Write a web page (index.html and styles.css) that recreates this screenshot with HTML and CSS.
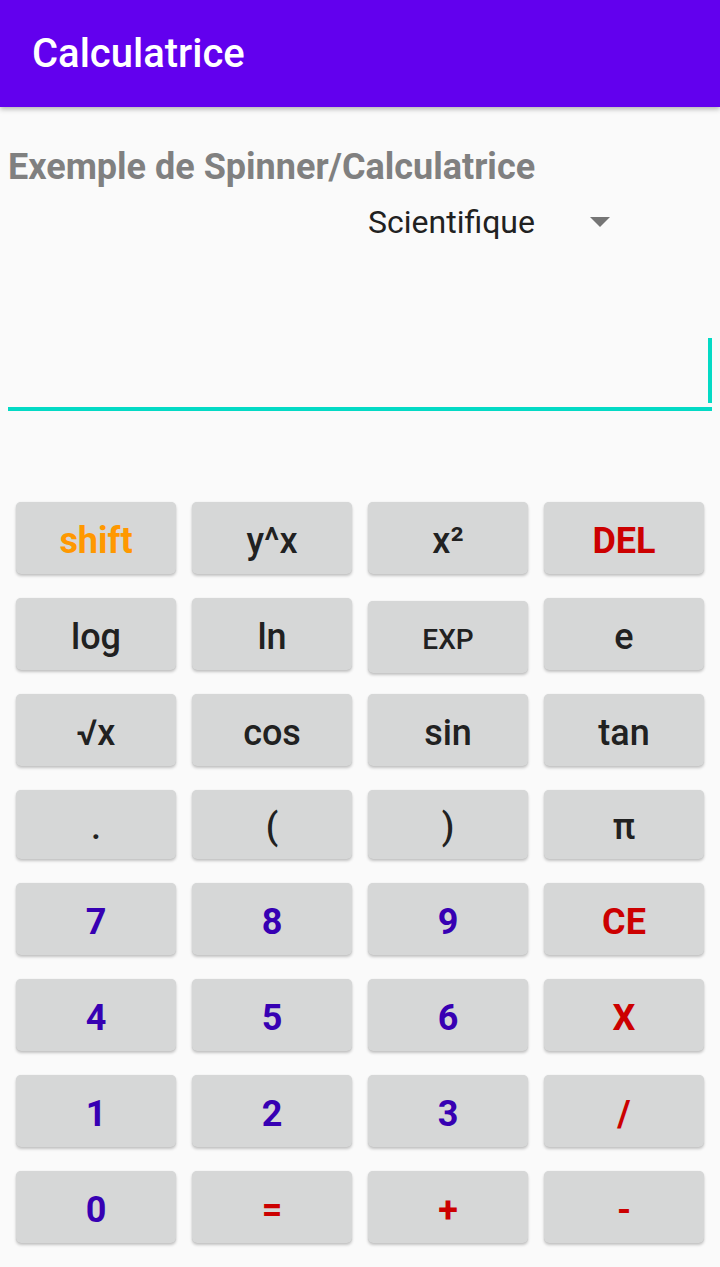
FILE: index.html
```html
<!DOCTYPE html>
<html lang="fr">
<head>
<meta charset="utf-8">
<title>Calculatrice</title>
<link rel="stylesheet" href="styles.css">
</head>
<body>
<header class="appbar"><h1 class="appbar-title">Calculatrice</h1></header>
<main class="content">
  <h2 class="label">Exemple de Spinner/Calculatrice</h2>
  <div class="spinner-row">
    <div class="spinner">
      <span class="spinner-text">Scientifique</span>
      <svg class="spinner-arrow" width="20" height="10" viewBox="0 0 20 10"><path d="M0 0H20L10 10Z" fill="#757575"/></svg>
    </div>
  </div>
  <div class="edit"><span class="cursor"></span></div>
  <div class="keys">
    <div class="row">
      <button class="key bold orange">shift</button>
      <button class="key">y^x</button>
      <button class="key">x²</button>
      <button class="key bold red">DEL</button>
    </div>
    <div class="row">
      <button class="key">log</button>
      <button class="key">ln</button>
      <button class="key small">EXP</button>
      <button class="key">e</button>
    </div>
    <div class="row">
      <button class="key">√x</button>
      <button class="key">cos</button>
      <button class="key">sin</button>
      <button class="key">tan</button>
    </div>
    <div class="row short">
      <button class="key">.</button>
      <button class="key">(</button>
      <button class="key">)</button>
      <button class="key">π</button>
    </div>
    <div class="row">
      <button class="key bold purple">7</button>
      <button class="key bold purple">8</button>
      <button class="key bold purple">9</button>
      <button class="key bold red">CE</button>
    </div>
    <div class="row">
      <button class="key bold purple">4</button>
      <button class="key bold purple">5</button>
      <button class="key bold purple">6</button>
      <button class="key bold red">X</button>
    </div>
    <div class="row">
      <button class="key bold purple">1</button>
      <button class="key bold purple">2</button>
      <button class="key bold purple">3</button>
      <button class="key bold red">/</button>
    </div>
    <div class="row">
      <button class="key bold purple">0</button>
      <button class="key bold red">=</button>
      <button class="key bold red">+</button>
      <button class="key bold red">-</button>
    </div>
  </div>
</main>
</body>
</html>
```
FILE: styles.css
```css
* { box-sizing: border-box; }
html, body { margin: 0; padding: 0; }
body {
  background: #fafafa;
  font-family: Roboto, "Liberation Sans", sans-serif;
  width: 720px;
  height: 1267px;
  overflow: hidden;
}
.appbar {
  height: 107px;
  background: #6200ee;
  display: flex;
  align-items: center;
  padding-left: 32px;
  box-shadow: 0 2px 5px rgba(0,0,0,0.3);
  position: relative;
  z-index: 1;
}
.appbar-title {
  margin: 0;
  color: #fff;
  font-size: 40px;
  font-weight: 500;
  line-height: 107px;
}
.content { padding-top: 39px; }
.label {
  margin: 0 0 0 8px;
  font-size: 36px;
  font-weight: 700;
  line-height: 42px;
  color: #808080;
}
.spinner-row {
  margin-top: 10px;
  display: flex;
}
.spinner {
  margin-left: 360px;
  width: 260px;
  height: 48px;
  padding: 0 10px 0 8px;
  display: flex;
  align-items: center;
  justify-content: space-between;
}
.spinner-text {
  font-size: 32px;
  line-height: 48px;
  color: #212121;
}
.spinner-arrow { display: block; margin-top: 0; }
.edit {
  margin: 84px 8px 0 8px;
  padding-top: 8px;
  border-bottom: 4px solid #03dac5;
  display: flex;
  justify-content: flex-end;
  align-items: flex-end;
}
.cursor {
  display: block;
  width: 4px;
  height: 65px;
  margin-bottom: 4px;
  background: #03dac5;
}
.keys {
  margin-top: 91px;
  padding: 0 16px;
  display: flex;
  flex-direction: column;
  gap: 24px;
}
.row {
  display: flex;
  gap: 16px;
  height: 72px;
}
.row.short { height: 69px; }
.key {
  flex: 0 0 160px;
  height: 100%;
  border: none;
  border-radius: 5px;
  background: #d6d7d7;
  box-shadow: 0 2px 3px rgba(0,0,0,0.22), 0 0 1px rgba(0,0,0,0.12);
  font-family: Roboto, "Liberation Sans", sans-serif;
  font-size: 36px;
  font-weight: 500;
  color: #212121;
  padding: 5px 0 0 0;
  display: flex;
  align-items: center;
  justify-content: center;
}
.key.small { font-size: 28px; margin-top: 3px; }
.key.bold { font-weight: 700; }
.orange { color: #ff9800 !important; }
.red { color: #cc0000 !important; }
.purple { color: #3700b3 !important; }
```
